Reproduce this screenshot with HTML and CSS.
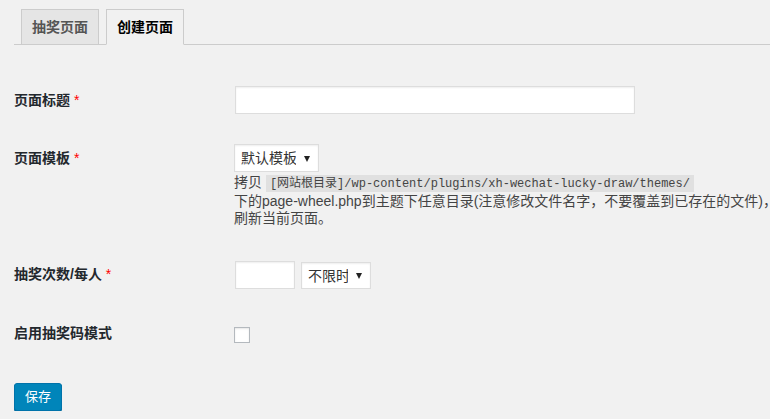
FILE: index.html
```html
<!DOCTYPE html>
<html lang="zh-CN">
<head>
    <meta charset="UTF-8">
    <meta name="viewport" content="width=device-width, initial-scale=1.0">
    <title>创建页面</title>
    <link rel="stylesheet" href="styles.css">
</head>
<body>
    <div class="wrap">
        <div class="nav-tabs">
            <a class="nav-tab" href="#">抽奖页面</a>
            <a class="nav-tab nav-tab-active" href="#">创建页面</a>
        </div>

        <form class="page-form">
            <table class="form-table">
                <tr>
                    <th><label for="title">页面标题</label> <span class="required">*</span></th>
                    <td><input type="text" id="title" class="regular-text"></td>
                </tr>
                <tr>
                    <th><label for="template">页面模板</label> <span class="required">*</span></th>
                    <td>
                        <span class="select-wrap">
                            <select id="template" class="select-template">
                                <option>默认模板</option>
                            </select>
                        </span>
                        <p class="description">
                            拷贝 <code>[网站根目录]/wp-content/plugins/xh-wechat-lucky-draw/themes/</code><br>
                            下的page-wheel.php到主题下任意目录(注意修改文件名字，不要覆盖到已存在的文件)，<br>
                            刷新当前页面。
                        </p>
                    </td>
                </tr>
                <tr>
                    <th><label for="times">抽奖次数/每人</label> <span class="required">*</span></th>
                    <td>
                        <div class="times-row">
                            <input type="text" id="times" class="small-text">
                            <span class="select-wrap">
                                <select class="select-period">
                                    <option>不限时</option>
                                </select>
                            </span>
                        </div>
                    </td>
                </tr>
                <tr>
                    <th><label for="code-mode">启用抽奖码模式</label></th>
                    <td><input type="checkbox" id="code-mode" class="checkbox"></td>
                </tr>
            </table>

            <p class="submit">
                <button type="button" class="button-primary">保存</button>
            </p>
        </form>
    </div>
</body>
</html>
```

FILE: styles.css
```css
body {
    margin: 0;
    background: #f1f1f1;
    color: #444;
    font-family: "Liberation Sans", "Noto Sans CJK SC", sans-serif;
    font-size: 14px;
    overflow: hidden;
}
.wrap {
    padding: 9px 0 0 14px;
}
.nav-tabs {
    display: flex;
    gap: 7px;
    padding-left: 7px;
    border-bottom: 1px solid #ccc;
}
.nav-tab {
    display: block;
    margin-bottom: -1px;
    padding: 5px 10px;
    line-height: 24px;
    font-size: 14px;
    font-weight: bold;
    color: #555;
    text-decoration: none;
    background: #e5e5e5;
    border: 1px solid #ccc;
}
.nav-tab-active {
    color: #000;
    background: #f1f1f1;
    border-bottom-color: #f1f1f1;
}
.form-table {
    margin-top: 26px;
    border-collapse: collapse;
    table-layout: fixed;
}
.form-table th {
    box-sizing: border-box;
    width: 210px;
    min-width: 210px;
    padding: 20px 10px 20px 0;
    text-align: left;
    vertical-align: top;
    line-height: 18px;
    font-weight: bold;
    color: #23282d;
    white-space: nowrap;
}
.form-table td {
    padding: 15px 10px;
    vertical-align: top;
    line-height: 18px;
}
.required {
    color: #f00;
    font-weight: normal;
}
input[type="text"],
select {
    box-sizing: border-box;
    height: 28px;
    border: 1px solid #ddd;
    background: #fff;
    box-shadow: inset 0 1px 2px rgba(0, 0, 0, 0.07);
    font-family: inherit;
    font-size: 14px;
    color: #32373c;
    outline: none;
}
.regular-text {
    display: block;
    width: 400px;
    margin: 0 0 0 1px;
    height: 27px;
}
.select-wrap {
    position: relative;
    display: inline-block;
    vertical-align: top;
}
.select-wrap::after {
    content: "";
    position: absolute;
    right: 9px;
    top: 12px;
    border-left: 3.5px solid transparent;
    border-right: 3.5px solid transparent;
    border-top: 6px solid #222;
    pointer-events: none;
}
select {
    appearance: none;
    -webkit-appearance: none;
    display: block;
    padding: 0 22px 0 6px;
    border-radius: 0;
    color: #333;
}
.select-template {
    width: 85px;
}
.description {
    margin: 2px 0 3px;
    line-height: 17px;
    white-space: nowrap;
    color: #444;
}
code {
    padding: 2px 4px 1px;
    background: rgba(0, 0, 0, 0.07);
    font-family: "Liberation Mono", "Noto Sans CJK SC", monospace;
    font-size: 12px;
    color: #444;
}
.times-row {
    display: flex;
    gap: 6px;
    align-items: flex-start;
}
.small-text {
    width: 60px;
    height: 27px;
    margin: 1px 0 0 1px;
}
.select-period {
    width: 70px;
    height: 27px;
    margin-top: 2px;
}
.times-row .select-wrap::after {
    top: 13px;
}
.checkbox {
    appearance: none;
    -webkit-appearance: none;
    display: block;
    width: 16px;
    height: 16px;
    margin: 8px 0 0;
    border: 1px solid #b4b9be;
    background: #fff;
    box-shadow: inset 0 1px 2px rgba(0, 0, 0, 0.1);
}
.submit {
    margin: 21px 0 0;
}
.button-primary {
    height: 28px;
    padding: 0 10px;
    border: 1px solid #0073aa;
    border-radius: 3px;
    background: #0085ba;
    box-shadow: 0 1px 0 #006799;
    color: #fff;
    font-family: inherit;
    font-size: 13px;
    line-height: 26px;
    cursor: pointer;
}
```
